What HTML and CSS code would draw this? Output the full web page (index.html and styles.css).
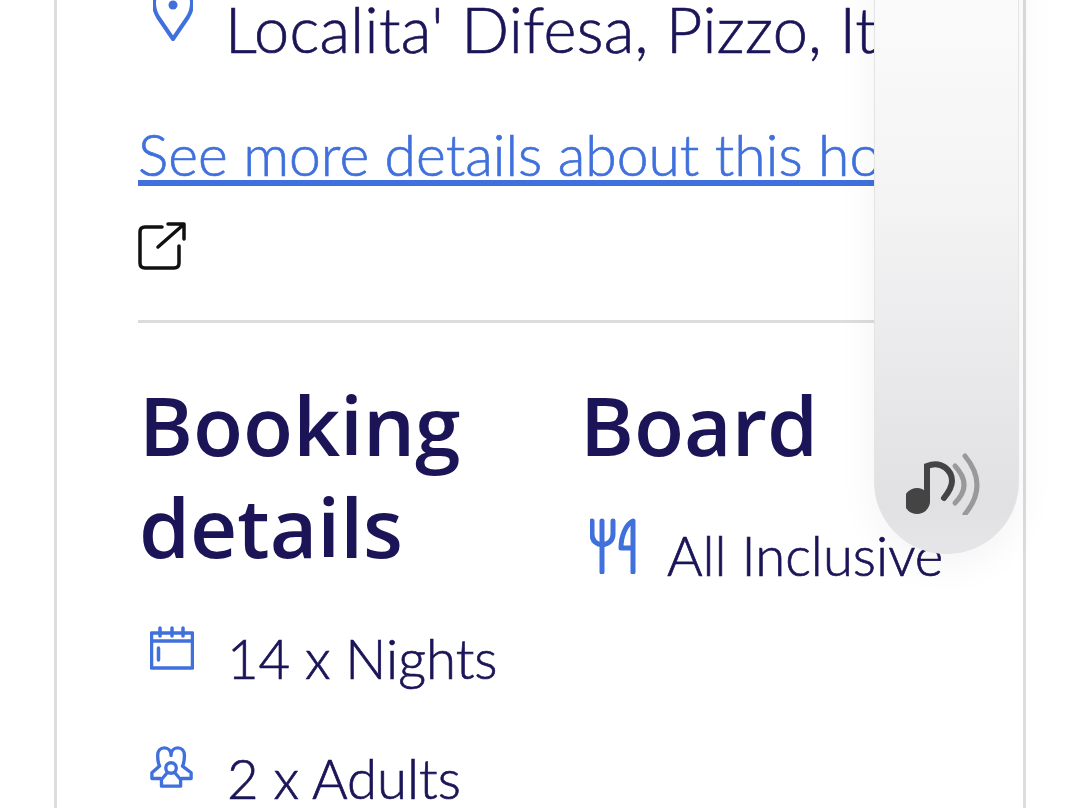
FILE: index.html
```html
<!DOCTYPE html>
<html lang="en">
<head>
    <meta charset="UTF-8">
    <title>Booking summary</title>
    <link rel="stylesheet" href="styles.css">
</head>
<body>
    <div class="card">
        <div class="info-row address">
            <svg class="icon pin" viewBox="0 0 40 60"><path d="M20 58 L5 36 C2 31 1 27 1 22 C1 11 9 2 20 2 C31 2 39 11 39 22 C39 27 38 31 35 36 Z"/><circle class="dot" cx="20" cy="24" r="4.5"/></svg>
            <span class="address-text">Localita' Difesa, Pizzo, Italy</span>
        </div>
        <a class="more-link" href="#">See more details about this hotel</a>
        <svg class="external" viewBox="0 0 48 48"><path d="M24 5 H7 Q2 5 2 10 V41 Q2 46 7 46 H36 Q41 46 41 41 V24"/><path d="M20 25 L45 3 M30 2 H46 V17"/></svg>
        <hr class="divider">
        <div class="details">
            <section>
                <h2>Booking details</h2>
                <div class="info-row item">
                    <svg class="icon" viewBox="0 0 44 44"><path d="M1.5 7 H42.5 V42 H1.5 Z M1.5 15 H42.5 M10 2 V10 M22 2 V10 M33 2 V10 M8.5 22 V34"/></svg>
                    <span>14 x Nights</span>
                </div>
                <div class="info-row item people">
                    <svg class="icon" viewBox="0 0 46 44"><path d="M11 33 H2 V27 L10 20 C8 16 8 13 8 9 C8 4 11 1 15 1 C19 1 22 4 22 9 C22 4 25 1 29 1 C33 1 36 4 36 9 C36 13 36 16 34 20 L43 27 V33 H33"/><circle cx="22" cy="22" r="5.5"/><path d="M18 27 L12 34 V41 H32 V34 L26 27"/></svg>
                    <span>2 x Adults</span>
                </div>
            </section>
            <section>
                <h2>Board</h2>
                <div class="info-row board">
                    <svg class="icon" viewBox="0 0 46 56"><path d="M2 3 V16 C2 23 6 26 12 27 M23 3 V16 C23 23 18 26 12 27 M12 3 V54 M43 54 V3 C36 6 31 18 31 30 H43"/></svg>
                    <span>All Inclusive</span>
                </div>
            </section>
        </div>
    </div>

    <div class="player">
        <svg class="note" viewBox="0 0 76 64"><circle cx="11" cy="50" r="13" fill="#444"/><path class="flag" d="M21 50 V15 C36 9 46 20 46 30 C46 36 42 42 38 47" stroke="#444"/><path d="M49 15 Q67 34 49 52" stroke="#999"/><path d="M59 5 Q83 34 59 63" stroke="#999"/></svg>
    </div>
</body>
</html>
```

FILE: styles.css
```css
* {box-sizing: border-box;}

html, body {
    margin: 0;
    height: 100%;
    overflow: hidden;
    background: #fff;
}

body {
    position: relative;
    font-family: "Lato", "Liberation Sans", sans-serif;
    color: #1b1558;
}

.card {
    width: 972px;
    margin: -40px 0 0 54px;
    padding: 0 0 0 84px;
    border: solid #dcdcdc;
    border-width: 0 3px;
    height: 900px;
}

.info-row {
    display: flex;
    align-items: flex-start;
}

.icon {
    flex: none;
    fill: none;
    stroke: #4070dc;
    stroke-width: 3.5;
    stroke-linejoin: round;
    stroke-linecap: round;
}

.pin .dot {
    fill: #4070dc;
    stroke: none;
}

.address, .more-link, .item, .board {
    font-weight: 300;
    -webkit-text-stroke: .7px currentColor;
}

.address {
    height: 124px;
    white-space: nowrap;
    font-size: 63px;
    letter-spacing: .3px;
    line-height: 70px;
    padding-top: 34px;
}

.address .pin {
    width: 40px;
    height: 60px;
    margin: -13px 32px 0 12px;
    stroke-width: 4;
}

.more-link {
    display: block;
    width: 790px;
    margin-left: -3px;
    margin-top: 45px;
    font-size: 57px;
    line-height: 51px;
    white-space: nowrap;
    color: #4070dc;
    text-decoration: none;
    border-bottom: 6px solid #4070dc;
    overflow: hidden;
}

.external {
    display: block;
    width: 48px;
    height: 48px;
    margin: 36px 0 0 -3px;
    fill: none;
    stroke: #111;
    stroke-width: 3.5;
    stroke-linecap: round;
    stroke-linejoin: round;
}

.divider {
    width: 790px;
    height: 3px;
    margin: 50px 0 0 -3px;
    border: 0;
    background: #dcdcdc;
}

.details {
    display: grid;
    grid-template-columns: 441px 1fr;
    margin-top: 50px;
}

h2 {
    margin: 0 0 0 -2px;
    font-family: "Open Sans", "Lato", sans-serif;
    font-size: 82px;
    line-height: 102px;
    font-weight: 600;
}

.item, .board {
    font-size: 54.5px;
    line-height: 66px;
    white-space: nowrap;
}

.item {
    margin-top: 51px;
    height: 120px;
}

.item span {
    margin-top: -3px;
}

.item .icon {
    width: 44px;
    height: 44px;
    margin: -2px 33px 0 9px;
}

.item.people {
    margin-top: 0;
}

.board {
    margin-top: 43px;
}

.board span {
    margin-top: 4px;
}

.board .icon {
    width: 46px;
    height: 56px;
    margin: 0 31px 0 8px;
    stroke-width: 5;
}

/* floating audio player */
.player {
    position: absolute;
    top: -40px;
    left: 874px;
    width: 145px;
    height: 594px;
    border: 1px solid #e4e4e4;
    border-radius: 0 0 72px 72px;
    background: linear-gradient(#fcfcfc, #f4f4f5 40%, #e5e5e7 80%, #e1e1e3 92%, #e6e6e8);
    box-shadow: 0 10px 40px rgba(0, 0, 0, .05);
}

.note {
    position: absolute;
    left: 31px;
    bottom: 38px;
    width: 76px;
    height: 64px;
    fill: none;
    stroke-width: 5;
    stroke-linecap: round;
}

.note .flag {
    stroke-width: 6;
}
```
